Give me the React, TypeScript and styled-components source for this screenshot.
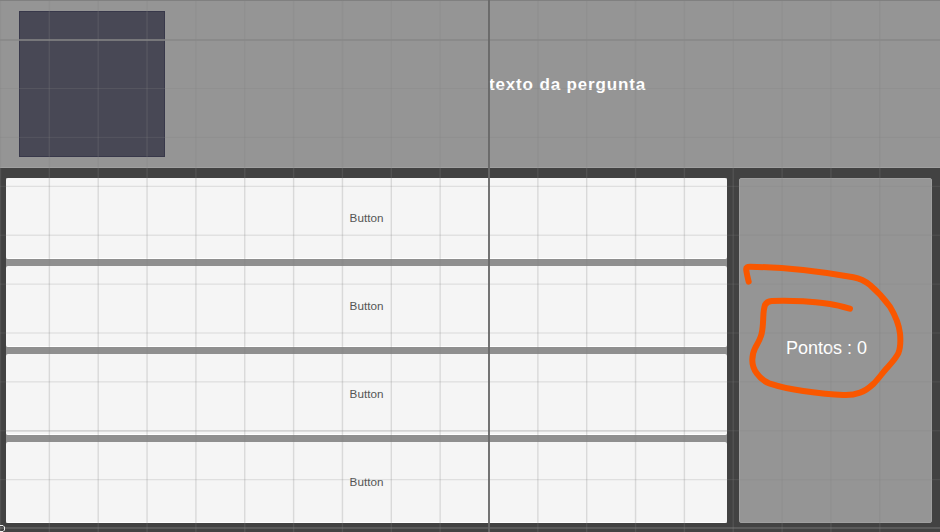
import React from 'react';
import styled, { createGlobalStyle } from 'styled-components';

const GlobalStyle = createGlobalStyle`
  html, body {
    margin: 0;
    padding: 0;
    width: 940px;
    height: 532px;
    overflow: hidden;
    background: #424242;
  }
`

const answers = ['a', 'b', 'c', 'd']
const columns = Array.from({ length: 19 }, (_, i) => 0.5 + i * 48.85)
const rows = Array.from({ length: 9 }, (_, i) => 88.5 + i * 48.9)

const App = () => {
  return (
    <Screen>
      <GlobalStyle />
      <Header>
        <QuestionImage />
        <QuestionText>texto da pergunta</QuestionText>
      </Header>
      <Body>
        <AnswerList>
          {answers.map((id) => (
            <AnswerButton key={id}>Button</AnswerButton>
          ))}
        </AnswerList>
        <ScorePanel>Pontos : 0</ScorePanel>
      </Body>
      <SceneGrid viewBox="0 0 940 532">
        {columns.map((x) => (
          <line key={x} x1={x} y1="0" x2={x} y2="532" stroke="#808080" strokeOpacity="0.24" strokeWidth="1.4" />
        ))}
        {rows.map((y) => (
          <line key={y} x1="0" y1={y} x2="940" y2={y} stroke="#808080" strokeOpacity="0.24" strokeWidth="1" />
        ))}
        <line x1="0" y1="528" x2="940" y2="528" stroke="#8a8a8a" strokeOpacity="0.7" strokeWidth="1" />
        <line x1="0" y1="40" x2="940" y2="40" stroke="#878787" strokeWidth="1.6" />
        <line x1="6" y1="431" x2="727" y2="431" stroke="#808080" strokeOpacity="0.14" strokeWidth="2" />
        <line x1="489" y1="0" x2="489" y2="532" stroke="#686868" strokeWidth="1.8" />
        <path d="M0 525.5 H3 L4.5 527 V530 L3 531.5 H0" fill="none" stroke="#f0f0f0" strokeWidth="1" />
      </SceneGrid>
      <Scribble viewBox="0 0 940 532">
        <path
          d="M748.7 281.7 C747.5 277 746.5 272 746.2 269.5 C746 267.5 747.5 266.8 750 266.8 C768 267 786 268.3 803.3 270 C820 271.8 838 274.5 853.3 277.3 C860 278.6 865 281 870 285 C877 291 884 298.5 890 306.7 C895 315 899 325 900 333.3 C900.7 341 900.5 348 898.3 353.3 C895.5 359 891 363.5 886.7 368.3 C882 373.5 878 379.5 873.3 384 C869 388 865 391 860 392.7 C855 394.5 849 395.3 843.3 395 C830 394.5 816 392.8 803.3 391 C792 389.5 780 387 770 383.7 C764 381.5 760 378 756.7 373.3 C753.5 369 752.3 364.5 752.3 360 C752.4 355.5 753.3 351.5 755 348.3 C757.5 343.5 760.5 339 761.7 333.3 C763 328 763 322 763.3 316.7 C763.5 312 764 308 765 305 C766.3 302.5 768.5 301.2 771.7 301 C782 300.6 793 300.8 803.3 301.3 C812 301.8 821 302.8 830 304 C837 305 844 307 850 308.7"
          fill="none"
          stroke="#f95700"
          strokeWidth="6"
          strokeLinecap="round"
          strokeLinejoin="round"
        />
      </Scribble>
    </Screen>
  )
}

const Screen = styled.div`
  position: relative;
  display: flex;
  flex-direction: column;
  width: 940px;
  height: 532px;
  overflow: hidden;
  background: #424242;
  font-family: 'Liberation Sans', Arial, sans-serif;
`
const Header = styled.div`
  position: relative;
  display: flex;
  align-items: center;
  justify-content: center;
  height: 168px;
  box-sizing: border-box;
  background: #959595;
  border-top: 1px solid #808080;
  border-bottom: 1px solid #a0a0a0;
`
const QuestionImage = styled.div`
  position: absolute;
  top: 10px;
  left: 19px;
  width: 146px;
  height: 146px;
  box-sizing: border-box;
  background: #484855;
  border: 1px solid #38384a;
`
const QuestionText = styled.div`
  margin-left: 195px;
  margin-top: 1px;
  color: #ffffff;
  font-size: 17px;
  font-weight: 700;
  letter-spacing: 0.85px;
`
const Body = styled.div`
  display: flex;
  gap: 12px;
  padding: 10px 8px 9px 6px;
  flex: 1;
  min-height: 0;
`
const AnswerList = styled.div`
  display: flex;
  flex-direction: column;
  gap: 7px;
  width: 721px;
  background: #8f8f8f;
`
const AnswerButton = styled.div`
  height: 81px;
  display: flex;
  align-items: center;
  justify-content: center;
  box-sizing: border-box;
  padding-bottom: 2px;
  background: #f5f5f5;
  border-radius: 2px;
  border-bottom: 1px solid #ffffff;
  color: #555555;
  font-size: 11.7px;
`
const ScorePanel = styled.div`
  display: flex;
  align-items: center;
  justify-content: center;
  width: 193px;
  box-sizing: border-box;
  padding: 0 18px 4px 0;
  background: #959595;
  border: 1px solid #9f9f9f;
  border-radius: 2px;
  color: #ffffff;
  font-size: 18px;
`
const SceneGrid = styled.svg`
  position: absolute;
  top: 0;
  left: 0;
  width: 940px;
  height: 532px;
  pointer-events: none;
`
const Scribble = styled.svg`
  position: absolute;
  top: 0;
  left: 0;
  width: 940px;
  height: 532px;
  pointer-events: none;
`

export default App
